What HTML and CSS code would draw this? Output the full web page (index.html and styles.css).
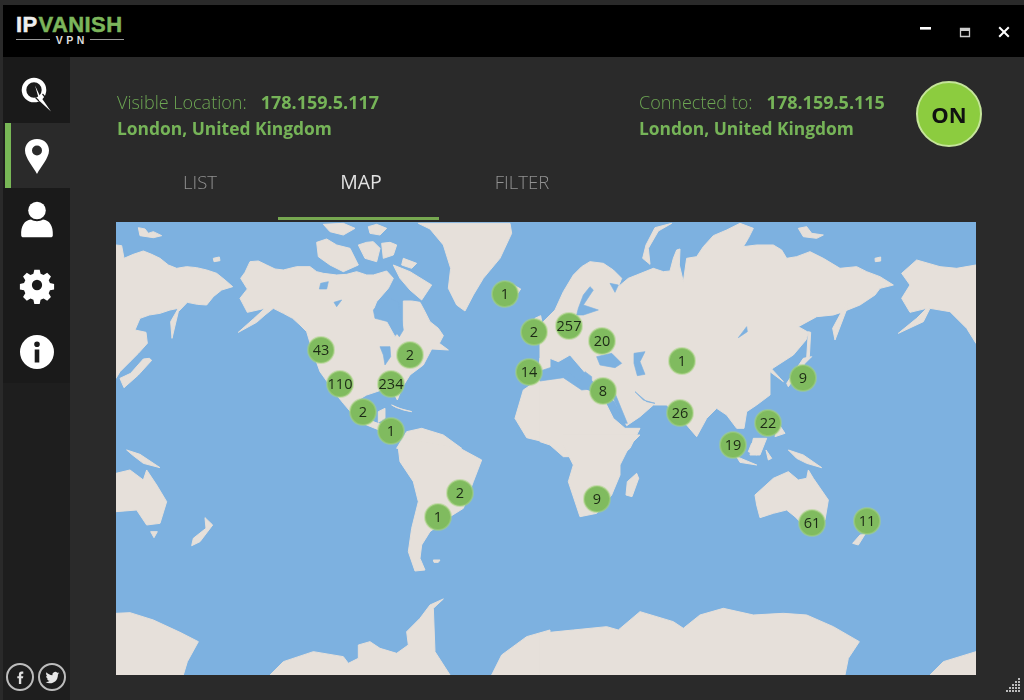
FILE: index.html
```html
<!DOCTYPE html>
<html lang="en">
<head>
<meta charset="utf-8">
<title>IPVanish VPN</title>
<link rel="stylesheet" href="styles.css">
</head>
<body>
<div class="window">
  <header class="titlebar">
    <div class="logo">
      <div class="logo-word"><span class="logo-ip">IP</span><span class="logo-vanish">VANISH</span></div>
      <div class="logo-sub"><span class="logo-rule"></span><span class="logo-vpn">VPN</span><span class="logo-rule"></span></div>
    </div>
    <div class="controls">
      <svg class="ctl" viewBox="0 0 14 14"><rect x="1" y="2" width="11" height="2.6" fill="#fff"/></svg>
      <svg class="ctl" viewBox="0 0 14 14"><path d="M2.500 3.500h9v8h-9z" fill="none" stroke="#ccc" stroke-width="1.300"/><rect x="2" y="3" width="10" height="3" fill="#ccc"/></svg>
      <svg class="ctl" viewBox="0 0 14 14"><path d="M2.200 2.200l9.600 9.600M11.800 2.200l-9.600 9.600" stroke="#fff" stroke-width="2"/></svg>
    </div>
  </header>
  <div class="body">
    <nav class="sidebar">
      <div class="nav-item first">
        <svg class="nav-ico" viewBox="0 0 36 40"><circle cx="15" cy="20" r="10" fill="none" stroke="#fff" stroke-width="4.600"/><path d="M16.500 27.500l3.500 3.500M23.500 24l2.500 3" stroke="#1a1a1a" stroke-width="1.200"/><path d="M16 15.500L20.500 25 32 41.500 20.500 31z" fill="#fff"/></svg>
      </div>
      <div class="nav-item active">
        <svg class="nav-ico" viewBox="0 0 36 40"><path fill-rule="evenodd" d="M18 2C10.300 2 6 7.600 6 13.500 6 21 14.500 30 18 37 21.500 30 30 21 30 13.500 30 7.600 25.700 2 18 2zM18 8.500a5 5 0 1 1 0 10 5 5 0 0 1 0-10z" fill="#fff"/></svg>
      </div>
      <div class="nav-item">
        <svg class="nav-ico" viewBox="0 2 36 40"><circle cx="18" cy="10.500" r="8.800" fill="#fff"/><path d="M2.200 35.500C1.600 26 5.500 20 12 19.500c3.500 2.200 8.500 2.200 12 0 6.500.5 10.400 6.500 9.800 16 0 1-1 1.800-2 1.800H4.200c-1 0-2-.8-2-1.800z" fill="#fff"/></svg>
      </div>
      <div class="nav-item">
        <svg class="nav-ico" viewBox="0 2 36 40"><path fill-rule="evenodd" d="M15 3h6l1 4.500 3.300 1.400 4-2.500 4.200 4.200-2.500 4 1.400 3.300 4.600 1v6l-4.600 1-1.400 3.300 2.500 4-4.200 4.200-4-2.500-3.300 1.400-1 4.700h-6l-1-4.700-3.300-1.400-4 2.500-4.200-4.200 2.500-4-1.400-3.300-4.600-1v-6l4.600-1 1.400-3.300-2.500-4 4.200-4.200 4 2.500 3.300-1.400zM18 14.300a5.700 5.700 0 1 0 0 11.400 5.700 5.700 0 0 0 0-11.400z" fill="#fff" transform="translate(1.800 2) scale(.9)"/></svg>
      </div>
      <div class="nav-item">
        <svg class="nav-ico" viewBox="0 0 36 40"><path fill-rule="evenodd" d="M18 3a17 17 0 1 0 0 34 17 17 0 0 0 0-34zM18 9.500a2.800 2.800 0 1 1 0 5.600 2.800 2.800 0 0 1 0-5.600zM15.700 17.500h4.600v13h-4.600z" fill="#fff"/></svg>
      </div>
      <div class="social">
        <div class="social-btn"><svg viewBox="0 0 14 14" class="social-ico"><path d="M5.500 13V7.800H4V5.800h1.500V4.300C5.500 2.700 6.500 1.500 8 1.500h1.600v2H8.500c-.5 0-.8.300-.8.800v1.500h1.900l-.3 2H7.700V13z" fill="#e0e0e0"/></svg></div>
        <div class="social-btn"><svg viewBox="0 0 14 14" class="social-ico"><path d="M13.500 3c-.5.200-1 .4-1.500.4.500-.3 1-.8 1.200-1.400-.5.300-1.100.5-1.700.6A2.700 2.700 0 0 0 6.900 5C4.700 4.900 2.700 3.800 1.400 2.200c-.7 1.200-.4 2.800.8 3.600-.4 0-.8-.1-1.200-.3 0 1.300.9 2.400 2.100 2.700-.4.100-.8.100-1.200 0 .3 1.100 1.300 1.900 2.500 1.900-1.100.9-2.500 1.300-3.900 1.100 4.500 2.800 11.600.5 11.600-7.100.6-.4 1-.8 1.400-1.100z" fill="#e8e8e8"/></svg></div>
      </div>
    </nav>
    <main class="content">
      <section class="status">
        <div class="loc-col">
          <div class="loc-line"><span class="loc-label">Visible Location:</span><span class="loc-ip">178.159.5.117</span></div>
          <div class="loc-place">London, United Kingdom</div>
        </div>
        <div class="loc-col loc-right">
          <div class="loc-line"><span class="loc-label">Connected to:</span><span class="loc-ip">178.159.5.115</span></div>
          <div class="loc-place">London, United Kingdom</div>
        </div>
        <button class="on-btn">ON</button>
      </section>
      <div class="tabs">
        <div class="tab">LIST</div>
        <div class="tab current">MAP</div>
        <div class="tab">FILTER</div>
      </div>
      <div class="map">
        <svg class="map-svg" viewBox="116 222 860 453" width="860" height="453">
          <rect x="116" y="222" width="860" height="453" fill="#7db1e0"/>
          <g class="land" transform="translate(110 215) scale(.33333)">
            <path d="M18 90L35 92 42 130 70 118 100 108 125 118 150 130 175 150 200 160 230 155 260 158 290 165 320 175 345 195 368 215 335 225 310 245 290 270 262 268 232 262 205 290 186 370 182 320 205 280 180 285 150 295 118 300 90 310 75 345 108 352 112 385 85 415 60 440 30 470 18 490z"/>
            <path d="M118 430L125 436 85 480 42 518 30 490 62 475 100 432z"/>
            <path d="M85 38L105 42 115 55 130 50 155 62 130 68 90 62z"/>
            <path d="M310 130L328 126 330 137 312 140z"/>
            <path d="M392 190L405 172 420 140 445 138 470 150 495 162 520 165 560 155 600 155 620 170 640 175 680 180 710 178 740 170 770 180 790 180 830 168 850 190 835 220 800 260 790 285 800 310 830 320 855 365 880 340 880 258 905 258 930 262 945 290 960 320 985 340 1000 362 988 385 1015 405 965 402 940 450 900 480 875 520 862 555 842 515 800 530 770 540 735 560 750 600 795 622 850 640 820 650 770 630 730 600 700 565 680 540 655 505 630 470 605 400 590 350 570 330 548 310 520 295 490 280 465 300 440 322 385 352 430 312 465 280 412 292 390 250 412 222z"/>
            <path d="M620 82L650 72 680 90 720 100 745 150 700 170 660 150 625 125z"/>
            <path d="M640 28L700 25 735 40 700 60 660 50z"/>
            <path d="M745 90L770 82 790 80 810 100 800 140 765 130z"/>
            <path d="M815 85L840 82 860 90 850 120 820 130z"/>
            <path d="M775 35L800 28 830 40 810 60 780 55z"/>
            <path d="M850 150L875 160 900 170 965 210 935 255 900 225 870 190z"/>
            <path d="M880 130L920 145 905 160 875 150z"/>
            <path d="M925 25L1200 25 1205 55 1170 130 1120 190 1090 240 1065 288 1040 270 1015 220 1022 160 1000 90 960 42z"/>
            <path d="M1210 210L1232 222 1220 240z"/>
            <path d="M1275 310L1292 302 1300 345 1280 380z"/>
            <path d="M1320 495L1280 498 1240 525 1215 610 1250 668 1320 685z"/>
            <path d="M1290 430L1320 395 1320 470 1285 475z"/>
            <path d="M845 570L880 585 905 590 860 578z"/>
            <path d="M805 590L825 580 825 610 805 622z"/>
            <path d="M890 650L935 640 1000 660 1055 700 860 700z"/>
            <path class="water" d="M790 285L830 245 865 262 880 345 868 365 835 320 795 310z"/>
            <path class="water" d="M632 205L655 200 650 222 628 222z"/>
            <path class="water" d="M672 262L695 255 680 275z"/>
            <path class="water" d="M810 395L840 395 842 425 825 450 820 420z"/>
          </g>
          <g class="land" transform="translate(540 215) scale(.33333)">
            <path d="M0 330L45 285 70 230 100 180 125 155 150 140 190 145 220 165 245 190 235 215 265 190 290 180 340 160 370 170 390 168 400 130 410 105 420 102 418 150 430 200 440 130 470 125 490 95 520 62 560 45 600 25 640 40 625 70 610 95 650 90 700 90 725 105 740 130 770 125 810 110 850 130 900 160 950 155 980 170 1020 185 1060 210 1020 220 1005 240 960 270 910 290 880 300 830 305 775 335 805 352 798 375 760 420 695 462 730 500 690 470 690 540 650 570 620 590 612 640 590 640 560 600 530 580 500 610 470 665 440 630 380 570 340 570 300 605 260 632 225 560 150 490 120 455 90 420 55 440 30 430 0 480z"/>
            <path d="M0 500L70 488 130 520 190 550 220 610 255 640 300 640 270 700 240 725 70 725 30 690 0 680z"/>
            <path d="M395 25L345 38 318 90 308 130 330 148 325 100 355 48z"/>
            <path d="M775 40L800 35 815 55 850 60 830 70 790 65z"/>
            <path d="M1005 130L1022 126 1022 138 1006 140z"/>
            <path d="M1085 175L1130 135 1200 155 1250 160 1308 150 1308 385 1280 340 1230 290 1170 280 1150 320 1075 355 1130 310 1160 280 1110 292 1085 250 1110 210z"/>
            <path d="M920 262L925 270 885 375 878 340z"/>
            <path d="M805 350L812 352 808 425 800 430z"/>
            <path d="M815 425L795 445 745 515 740 505 790 430z"/>
            <path d="M640 670L680 670 660 720 630 720z"/>
            <path d="M715 625L735 655 705 665z"/>
            <path class="water" d="M115 280L130 240 150 215 160 225 130 270 175 285 130 300 110 300z"/>
            <path class="water" d="M170 425L215 415 245 445 225 458 180 450z"/>
            <path class="water" d="M282 415L315 410 300 440 315 478 292 482 282 445z"/>
            <path class="water" d="M0 468L40 455 75 470 95 478 120 500 135 470 155 485 155 522 125 525 70 488 0 498z"/>
            <path class="water" d="M212 530L225 535 262 625 250 625z"/>
            <path class="water" d="M285 530L310 555 345 565 320 560z"/>
            <path class="water" d="M595 368L620 335 622 350z"/>
            <path class="water" d="M210 205L235 210 225 232z"/>
          </g>
          <g class="land" transform="translate(110 445) scale(.33333)">
            <path d="M18 85L60 75 100 105 110 75 140 120 170 170 150 235 110 240 80 195 18 200z"/>
            <path d="M50 15L90 28 150 68 100 55 70 32z"/>
            <path d="M122 260L142 260 132 278z"/>
            <path d="M285 218L308 240 270 290 245 302 250 280 288 250z"/>
            <path d="M865 10L880 -20 1050 10 1115 45 1090 110 1060 190 1020 215 960 260 935 300 930 340 945 375 915 378 895 320 905 250 925 170 910 110 870 50z"/>
            <path d="M970 345L990 345 985 352 972 352z"/>
            <path d="M18 505L60 503 130 525 210 562 265 590 232 650 220 690 18 690z"/>
            <path d="M480 690L520 650 610 620 700 635 715 655 745 640 745 600 780 590 810 610 860 625 895 600 890 560 930 520 960 480 1000 462 970 490 975 620 1020 690z"/>
            <path d="M1145 690L1175 630 1250 575 1320 555 1320 690z"/>
          </g>
          <g class="land" transform="translate(540 445) scale(.33333)">
            <path d="M70 -30L300 -30 270 0 240 60 240 90 215 150 170 205 120 215 85 110 100 60 70 0z"/>
            <path d="M290 85L296 100 276 155 258 150 262 110z"/>
            <path d="M645 150L700 100 745 80 775 105 800 100 805 75 820 100 865 165 855 225 800 250 765 215 740 195 700 205 660 218 650 180z"/>
            <path d="M745 15L790 30 845 68 800 55 770 40z"/>
            <path d="M590 35L650 60 600 52z"/>
            <path d="M635 -5L670 -5 650 30 625 20z"/>
            <path d="M678 15L695 40 685 45z"/>
            <path d="M975 268L955 300 938 295 960 270z"/>
            <path d="M0 565L100 555 200 545 235 555 300 500 400 530 430 550 480 510 550 490 640 510 730 505 800 510 880 545 958 590 925 640 915 690 0 690z"/>
            <path d="M1170 690L1210 650 1308 620 1308 690z"/>
          </g>
          <g class="pins">
            <g class="pin"><circle cx="505" cy="294" r="13"/><text x="505" y="299">1</text></g>
            <g class="pin"><circle cx="534" cy="332" r="13"/><text x="534" y="337">2</text></g>
            <g class="pin"><circle cx="569" cy="326" r="13"/><text x="569" y="331">257</text></g>
            <g class="pin"><circle cx="602" cy="341" r="13"/><text x="602" y="346">20</text></g>
            <g class="pin"><circle cx="321" cy="350" r="13"/><text x="321" y="355">43</text></g>
            <g class="pin"><circle cx="410" cy="355" r="13"/><text x="410" y="360">2</text></g>
            <g class="pin"><circle cx="340" cy="384" r="13"/><text x="340" y="389">110</text></g>
            <g class="pin"><circle cx="391" cy="384" r="13"/><text x="391" y="389">234</text></g>
            <g class="pin"><circle cx="529" cy="372" r="13"/><text x="529" y="377">14</text></g>
            <g class="pin"><circle cx="603" cy="391" r="13"/><text x="603" y="396">8</text></g>
            <g class="pin"><circle cx="682" cy="361" r="13"/><text x="682" y="366">1</text></g>
            <g class="pin"><circle cx="803" cy="378" r="13"/><text x="803" y="383">9</text></g>
            <g class="pin"><circle cx="680" cy="413" r="13"/><text x="680" y="418">26</text></g>
            <g class="pin"><circle cx="768" cy="423" r="13"/><text x="768" y="428">22</text></g>
            <g class="pin"><circle cx="733" cy="445" r="13"/><text x="733" y="450">19</text></g>
            <g class="pin"><circle cx="363" cy="412" r="13"/><text x="363" y="417">2</text></g>
            <g class="pin"><circle cx="391" cy="431" r="13"/><text x="391" y="436">1</text></g>
            <g class="pin"><circle cx="460" cy="493" r="13"/><text x="460" y="498">2</text></g>
            <g class="pin"><circle cx="438" cy="517" r="13"/><text x="438" y="522">1</text></g>
            <g class="pin"><circle cx="597" cy="499" r="13"/><text x="597" y="504">9</text></g>
            <g class="pin"><circle cx="812" cy="523" r="13"/><text x="812" y="528">61</text></g>
            <g class="pin"><circle cx="867" cy="521" r="13"/><text x="867" y="526">11</text></g>
          </g>
        </svg>
      </div>
    </main>
  </div>
  <svg class="grip" viewBox="0 0 16 16"><path d="M13 1h2v2h-2zM10 4h2v2h-2zM13 4h2v2h-2zM7 7h2v2H7zM10 7h2v2h-2zM13 7h2v2h-2zM4 10h2v2H4zM7 10h2v2H7zM10 10h2v2h-2zM13 10h2v2h-2zM1 13h2v2H1zM4 13h2v2H4zM7 13h2v2H7zM10 13h2v2h-2zM13 13h2v2h-2z" fill="#bbb"/></svg>
</div>
</body>
</html>
```
FILE: styles.css
```css
* { box-sizing: border-box; }
html, body { margin: 0; height: 100%; overflow: hidden; }
body { background: #2a2a2a; font-family: "Open Sans", "Noto Sans", sans-serif; }
.window { width: 1024px; height: 700px; padding: 5px 0 0 3px; position: relative; display: flex; flex-direction: column; filter: blur(.45px); }
.titlebar { height: 52px; flex: none; background: #000; display: flex; align-items: center; justify-content: space-between; padding: 0 13px; }
.logo { width: 108px; display: flex; flex-direction: column; margin-top: -2px; }
.logo-word { font-family: "Liberation Sans", sans-serif; font-weight: 700; font-size: 22px; line-height: 21px; letter-spacing: .4px; white-space: nowrap; -webkit-text-stroke: .5px currentColor; }
.logo-ip { color: #eee; margin-right: 1px; }
.logo-vanish { color: #7cb55b; }
.logo-sub { display: flex; align-items: center; gap: 6px; color: #ddd; font-family: "Liberation Sans", sans-serif; font-weight: 700; font-size: 10.500px; line-height: 11px; }
.logo-vpn { letter-spacing: 3.500px; margin-right: -3.500px; }
.logo-rule { flex: 1; height: 1px; background: #9a9a9a; margin-bottom: 2px; }
.controls { display: flex; gap: 25px; align-items: center; margin-top: 1px; }
.ctl { width: 14px; height: 14px; display: block; }
.body { flex: 1; display: flex; min-height: 0; }
.sidebar { width: 67px; flex: none; background: #1e1e1e; display: flex; flex-direction: column; position: relative; }
.nav-item { height: 65px; display: flex; align-items: center; justify-content: center; background: #1a1a1a; padding-top: 2px; }
.nav-item.first { height: 66px; padding-top: 0; }
.nav-item.active { background: #2a2a2a; border-left: 6px solid #78b756; margin-left: 2px; padding: 2px 8px 0 0; }
.nav-ico { width: 36px; height: 40px; display: block; overflow: visible; }
.social { margin-top: auto; padding: 0 0 9px 3px; display: flex; gap: 4px; }
.social-btn { width: 28px; height: 28px; border: 2px solid #bdbdbd; border-radius: 50%; display: flex; align-items: center; justify-content: center; }
.social-ico { width: 15px; height: 15px; display: block; }
.content { flex: 1; min-width: 0; padding: 24px 0 0 46px; display: flex; flex-direction: column; }
.status { display: flex; align-items: flex-start; height: 66px; }
.loc-col { color: #76b458; font-size: 17.400px; width: 522px; line-height: 26px; padding: 8px 0 0 1px; }
.loc-right { width: 278px; }
.loc-line { display: flex; gap: 14px; font-size: 18px; }
.loc-label { font-weight: 300; color: #6da653; }
.loc-ip, .loc-place { font-weight: 700; }
.on-btn { width: 66px; height: 66px; border-radius: 50%; border: 2px solid #c5e59a; background: #8ccc3f; color: #111; font-family: inherit; font-size: 22px; font-weight: 700; padding: 0; }
.tabs { display: flex; height: 67px; margin-top: 6px; padding-left: 1px; margin-bottom: 2px; flex: none; }
.tab { width: 161px; padding: 16px 0 0 5px; text-align: center; color: #929292; font-size: 18.500px; font-weight: 300; }
.tab.current { color: #e2e2e2; border-bottom: 3px solid #76a850; font-size: 19.500px; font-weight: 400; padding-top: 15px; }
.map { width: 860px; height: 453px; }
.map-svg { display: block; }
.land path { fill: #e6e0da; stroke: #e6e0da; stroke-width: 3; stroke-linejoin: round; }
.land path.water { fill: #7db1e0; stroke: #7db1e0; stroke-width: 2; }
.pin circle { fill: #80bb5f; stroke: #a5d37f; stroke-opacity: .5; stroke-width: 2; }
.pin text { font-family: "Open Sans", "Noto Sans", sans-serif; font-size: 14.500px; fill: #1c2a16; text-anchor: middle; }
.grip { position: absolute; right: 3px; bottom: 7px; width: 16px; height: 16px; }
```
